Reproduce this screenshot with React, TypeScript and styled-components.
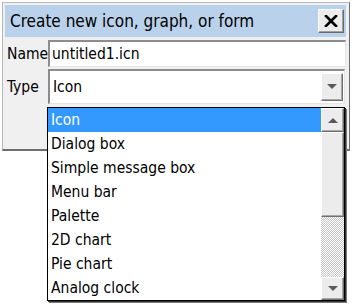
import React from "react";
import styled, { createGlobalStyle } from "styled-components";

const GlobalStyle = createGlobalStyle`
  html, body { margin: 0; padding: 0; background: #ffffff; }
  body {
    font-family: "DejaVu Sans Condensed", "DejaVu Sans", Verdana, sans-serif;
    font-stretch: condensed;
    color: #000;
  }
  * { box-sizing: border-box; }
`;

const Stage = styled.div`
  position: relative;
  width: 356px;
  height: 307px;
  padding: 2px 0 0 2px;
`;

const Window = styled.div`
  width: 348px;
  height: 149px;
  border: 1px solid #b8b8b8;
  border-right-color: #6e6e6e;
  border-bottom: 2px solid #6e6e6e;
  background: #f0f0f0;
  display: flex;
  flex-direction: column;
`;

const TitleBar = styled.div`
  margin: 2px 3px 0 2px;
  height: 32px;
  background: #b9d1ea;
  display: flex;
  align-items: center;
  justify-content: space-between;
  padding: 0 2px 0 5px;
`;

const Title = styled.span`
  font-size: 17px;
  color: #000;
  white-space: nowrap;
`;

const CloseButton = styled.div`
  width: 26px;
  height: 24px;
  background: #ececec;
  border: 1px solid;
  border-color: #ffffff #6a6a6a #6a6a6a #ffffff;
  box-shadow: inset -1px -1px 0 #a0a0a0;
  display: flex;
  align-items: center;
  justify-content: center;
`;

const Row = styled.div<{ $h: number; $top: number }>`
  display: flex;
  align-items: center;
  height: ${(p) => p.$h}px;
  margin-top: ${(p) => p.$top}px;
  padding-right: 3px;
`;

const Label = styled.span`
  width: 45px;
  padding-left: 4px;
  font-size: 15.5px;
  white-space: nowrap;
`;

const Field = styled.div`
  flex: 1;
  height: 100%;
  background: #fff;
  border-style: solid;
  border-width: 2px 1px 1px 2px;
  border-color: #8c8c8c #e4e4e4 #e4e4e4 #8c8c8c;
  display: flex;
  align-items: center;
  font-size: 15.5px;
  padding-left: 2px;
`;

const SelectField = styled(Field)`
  padding: 2px 1px 2px 3px;
  justify-content: space-between;
  margin-right: 1px;
`;

const DropButton = styled.div`
  width: 22px;
  height: 28px;
  background: #ececec;
  border: 1px solid;
  border-color: #ffffff #707070 #707070 #ffffff;
  box-shadow: inset -1px -1px 0 #a8a8a8;
  display: flex;
  align-items: center;
  justify-content: center;
`;

const ListBox = styled.div`
  position: absolute;
  left: 47px;
  top: 107px;
  width: 298px;
  height: 194px;
  border: 1px solid #000;
  box-shadow: 1px 1px 0 #303030, 2px 2px 0 #7a7a7a;
  background: #fff;
  display: flex;
`;

const Items = styled.div`
  flex: 1;
  display: flex;
  flex-direction: column;
`;

const Item = styled.div<{ $selected?: boolean }>`
  height: 24px;
  line-height: 24px;
  padding-left: 3px;
  font-size: 15.5px;
  white-space: nowrap;
  background: ${(p) => (p.$selected ? "#3399ff" : "transparent")};
  color: ${(p) => (p.$selected ? "#ffffff" : "#000")};
`;

const ScrollBar = styled.div`
  width: 23px;
  display: flex;
  flex-direction: column;
`;

const ScrollButton = styled.div<{ $h: number }>`
  height: ${(p) => p.$h}px;
  background: #ececec;
  border: 1px solid;
  border-color: #ffffff #707070 #707070 #ffffff;
  box-shadow: inset -1px -1px 0 #a8a8a8;
  display: flex;
  align-items: center;
  justify-content: center;
`;

const Track = styled.div`
  flex: 1;
  background: repeating-conic-gradient(#c6c6c6 0 25%, #ffffff 0 50%) 0 0 / 2px 2px;
`;

const Arrow = ({ up }: { up?: boolean }) => (
  <svg width="10" height="6" viewBox="0 0 10 6">
    <path d={up ? "M0 6 L5 1 L10 6 Z" : "M0 0 L10 0 L5 5 Z"} fill="#5a5a5a" />
  </svg>
);

const CloseIcon = () => (
  <svg width="14" height="12" viewBox="0 0 14 12">
    <path d="M2 1 L12 11 M12 1 L2 11" stroke="#000" strokeWidth="2.6" strokeLinecap="square" />
  </svg>
);

const options = [
  "Icon",
  "Dialog box",
  "Simple message box",
  "Menu bar",
  "Palette",
  "2D chart",
  "Pie chart",
  "Analog clock",
];

export default function App() {
  return (
    <Stage>
      <GlobalStyle />
      <Window>
        <TitleBar>
          <Title>Create new icon, graph, or form</Title>
          <CloseButton>
            <CloseIcon />
          </CloseButton>
        </TitleBar>
        <Row $h={27} $top={3}>
          <Label>Name</Label>
          <Field>untitled1.icn</Field>
        </Row>
        <Row $h={35} $top={2}>
          <Label>Type</Label>
          <SelectField>
            <span>Icon</span>
            <DropButton>
              <Arrow />
            </DropButton>
          </SelectField>
        </Row>
      </Window>
      <ListBox>
        <Items>
          {options.map((o, i) => (
            <Item key={o} $selected={i === 0}>
              {o}
            </Item>
          ))}
        </Items>
        <ScrollBar>
          <ScrollButton $h={24}>
            <Arrow up />
          </ScrollButton>
          <ScrollButton $h={85} />
          <Track />
          <ScrollButton $h={23}>
            <Arrow />
          </ScrollButton>
        </ScrollBar>
      </ListBox>
    </Stage>
  );
}
